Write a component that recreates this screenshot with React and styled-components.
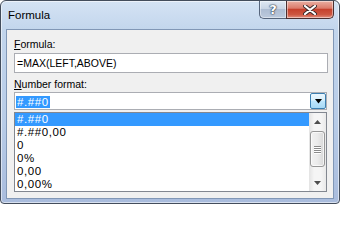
import React from "react";
import styled, { createGlobalStyle } from "styled-components";

const GlobalStyle = createGlobalStyle`
  body {
    margin: 0;
    background: #fff;
  }
`;

const formats = ["#.##0", "#.##0,00", "0", "0%", "0,00", "0,00%"];

const App = () => {
  return (
    <>
      <GlobalStyle />
      <Window>
        <TitleBar>
          <Title>Formula</Title>
          <CaptionButtons>
            <HelpButton>?</HelpButton>
            <CloseButton>
              <svg width="14" height="10" viewBox="0 0 14 10">
                <path
                  d="M2 1 L12 9 M12 1 L2 9"
                  stroke="#3a2a2a"
                  strokeWidth="4"
                  strokeLinecap="round"
                />
                <path
                  d="M2 1 L12 9 M12 1 L2 9"
                  stroke="#fff"
                  strokeWidth="2.2"
                  strokeLinecap="round"
                />
              </svg>
            </CloseButton>
          </CaptionButtons>
        </TitleBar>
        <Client>
          <Label $top={7}>
            <u>F</u>ormula:
          </Label>
          <TextBox>=MAX(LEFT,ABOVE)</TextBox>
          <Label $top={4}>
            <u>N</u>umber format:
          </Label>
          <Combo>
            <ComboValue>
              <Selected>#.##0</Selected>
            </ComboValue>
            <DropButton>
              <svg width="7" height="5" viewBox="0 0 7 5">
                <path d="M0 0 H7 L3.5 4.5 Z" fill="#000" />
              </svg>
            </DropButton>
          </Combo>
          <List>
            <Items>
              {formats.map((f, i) => (
                <Item key={f} $active={i === 0}>
                  {f}
                </Item>
              ))}
            </Items>
            <ScrollBar>
              <ArrowButton>
                <svg width="7" height="4" viewBox="0 0 7 4">
                  <path d="M0 4 H7 L3.5 0 Z" fill="#4d4d4d" />
                </svg>
              </ArrowButton>
              <Track>
                <Thumb>
                  <Grip />
                  <Grip />
                  <Grip />
                  <Grip />
                </Thumb>
              </Track>
              <ArrowButton>
                <svg width="7" height="4" viewBox="0 0 7 4">
                  <path d="M0 0 H7 L3.5 4 Z" fill="#4d4d4d" />
                </svg>
              </ArrowButton>
            </ScrollBar>
          </List>
        </Client>
      </Window>
    </>
  );
};

export default App;

let Window = styled.div`
  width: 340px;
  height: 204px;
  box-sizing: border-box;
  border: 1px solid #434d5c;
  border-radius: 6px 6px 4px 4px;
  background: linear-gradient(
    180deg,
    #d4e3f4 0%,
    #c2d5ec 15%,
    #b8cce7 60%,
    #a9bcdd 100%
  );
  box-shadow: inset 0 0 0 1px rgba(255, 255, 255, 0.55);
  padding: 0 5px 4px;
  display: flex;
  flex-direction: column;
  font-family: "Liberation Sans", Arial, sans-serif;
  color: #000;
`;

let TitleBar = styled.div`
  height: 28px;
  display: flex;
  align-items: flex-start;
  flex-shrink: 0;
`;

let Title = styled.span`
  margin: 7px 0 0 2px;
  font-size: 11.5px;
  line-height: 15px;
`;

let CaptionButtons = styled.div`
  margin-left: auto;
  display: flex;
`;

let CaptionButton = styled.div`
  height: 18px;
  box-sizing: border-box;
  display: flex;
  align-items: center;
  justify-content: center;
  border: 1px solid #56657c;
  border-top: none;
  box-shadow: inset 0 0 0 1px rgba(255, 255, 255, 0.45);
`;

let HelpButton = styled(CaptionButton)`
  width: 27px;
  border-right: none;
  border-bottom-left-radius: 5px;
  background: linear-gradient(
    180deg,
    #dfe8f3 0%,
    #c9d5e5 45%,
    #aebdd3 50%,
    #bccadd 100%
  );
  color: #fff;
  font-family: "DejaVu Sans", sans-serif;
  font-size: 13px;
  font-weight: bold;
  text-shadow: 0 0 1px #2d3a4d, 0 0 1px #2d3a4d, 0 0 2px #2d3a4d;
`;

let CloseButton = styled(CaptionButton)`
  width: 48px;
  border-color: #4a2f30;
  border-bottom-right-radius: 5px;
  background: linear-gradient(
    180deg,
    #eab0a3 0%,
    #dc7b6b 42%,
    #c6412d 50%,
    #cd5741 80%,
    #e29080 100%
  );
`;

let Client = styled.div`
  flex: 1;
  background: #f0f0f0;
  border: 1px solid #8197b6;
  padding: 0 5px 0 7px;
  display: flex;
  flex-direction: column;
  font-size: 10.5px;
`;

let Label = styled.div`
  margin-top: ${(p) => p.$top}px;
  height: 15px;
  line-height: 15px;
`;

let TextBox = styled.div`
  margin-top: 1px;
  height: 20px;
  box-sizing: border-box;
  border: 1px solid #abadb3;
  background: #fff;
  padding-left: 2px;
  line-height: 18px;
`;

let Combo = styled.div`
  height: 18px;
  margin-right: 1px;
  box-sizing: border-box;
  border: 1px solid #abadb3;
  background: #fff;
  display: flex;
`;

let ComboValue = styled.div`
  flex: 1;
  padding: 3px 0 0 1px;
`;

let Selected = styled.span`
  display: inline-block;
  height: 12px;
  line-height: 12px;
  padding: 0 1px;
  font-size: 11.5px;
  letter-spacing: 0.6px;
  background: #3399ff;
  color: #fff;
  vertical-align: top;
`;

let DropButton = styled.div`
  width: 16px;
  height: 16px;
  box-sizing: border-box;
  border: 1px solid #3c7fb1;
  border-radius: 2px;
  background: linear-gradient(180deg, #eaf6fd 0%, #d9f0fc 45%, #bee6fd 50%, #a7d9f5 100%);
  display: flex;
  align-items: center;
  justify-content: center;
`;

let List = styled.div`
  margin: 2px 1px 0 0;
  height: 80px;
  box-sizing: border-box;
  border: 1px solid #828790;
  background: #fff;
  display: flex;
`;

let Items = styled.div`
  flex: 1;
`;

let Item = styled.div`
  height: 13px;
  line-height: 13px;
  padding-left: 2px;
  font-size: 11.5px;
  letter-spacing: 0.6px;
  background: ${(p) => (p.$active ? "#3399ff" : "transparent")};
  color: ${(p) => (p.$active ? "#fff" : "#000")};
`;

let ScrollBar = styled.div`
  width: 17px;
  display: flex;
  flex-direction: column;
  background: linear-gradient(90deg, #e3e3e3 0%, #f5f5f5 30%, #f5f5f5 70%, #e9e9e9 100%);
`;

let ArrowButton = styled.div`
  height: 17px;
  display: flex;
  align-items: center;
  justify-content: center;
`;

let Track = styled.div`
  flex: 1;
  padding: 1px 1px 0;
`;

let Thumb = styled.div`
  height: 36px;
  box-sizing: border-box;
  border: 1px solid #979797;
  border-radius: 3px;
  background: linear-gradient(90deg, #f2f2f2 0%, #ebebeb 50%, #d8d8d8 100%);
  box-shadow: inset 0 0 0 1px rgba(255, 255, 255, 0.7);
  display: flex;
  flex-direction: column;
  align-items: center;
  justify-content: center;
  gap: 1px;
`;

let Grip = styled.div`
  width: 7px;
  height: 1px;
  background: #8a8a8a;
  box-shadow: 0 1px 0 #fff;
`;
